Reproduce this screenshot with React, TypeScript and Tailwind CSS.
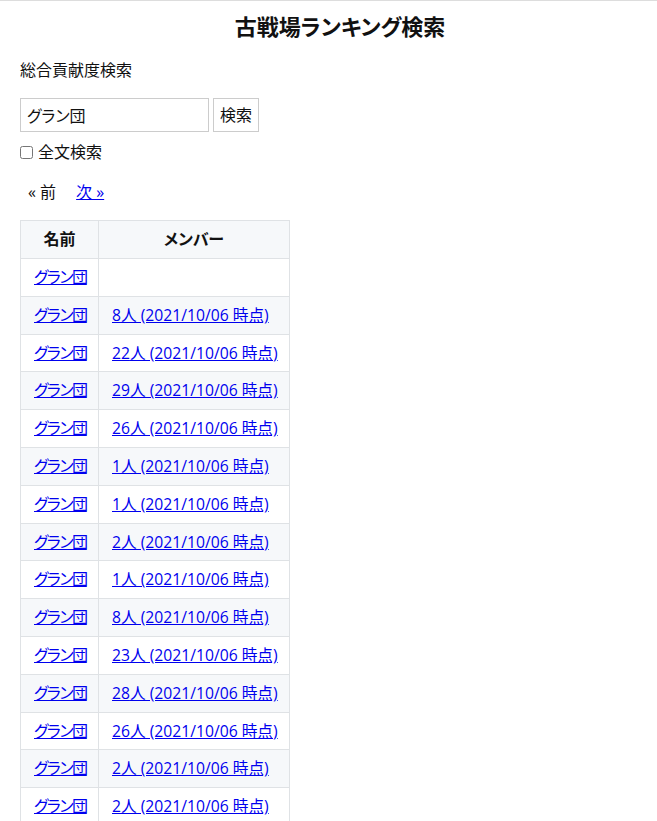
import { useState } from "react";

type Row = { name: string; members: number | null };

const rows: Row[] = [
  { name: "グラン団", members: null },
  { name: "グラン団", members: 8 },
  { name: "グラン団", members: 22 },
  { name: "グラン団", members: 29 },
  { name: "グラン団", members: 26 },
  { name: "グラン団", members: 1 },
  { name: "グラン団", members: 1 },
  { name: "グラン団", members: 2 },
  { name: "グラン団", members: 1 },
  { name: "グラン団", members: 8 },
  { name: "グラン団", members: 23 },
  { name: "グラン団", members: 28 },
  { name: "グラン団", members: 26 },
  { name: "グラン団", members: 2 },
  { name: "グラン団", members: 2 },
];

export default function App() {
  const [query, setQuery] = useState("グラン団");
  const [fullText, setFullText] = useState(false);

  return (
    <div
      className="min-h-screen border-t border-[#dddddd] bg-white px-[20px] text-[16px] text-[#111] [font-feature-settings:'palt']"
      style={{ fontFamily: '"Open Sans", "Noto Sans CJK JP", sans-serif' }}
    >
      <h1 className="mt-[9px] pl-[23px] text-center text-[22px] font-bold leading-[32px]">古戦場ランキング検索</h1>

      <p className="mt-[17px] leading-[22px]">総合貢献度検索</p>

      <form className="mt-[17px] flex gap-[4px]" onSubmit={(e) => e.preventDefault()}>
        <input
          type="text"
          value={query}
          onChange={(e) => setQuery(e.target.value)}
          className="h-[34px] w-[189px] border border-[#cccccc] px-[6px] text-[16px] outline-none"
        />
        <button
          type="submit"
          className="h-[34px] w-[46px] border border-[#cccccc] bg-white text-[16px]"
        >
          検索
        </button>
      </form>

      <label className="mt-[9px] flex items-center gap-[5px] leading-[22px]">
        <input
          type="checkbox"
          checked={fullText}
          onChange={(e) => setFullText(e.target.checked)}
          className="h-[13px] w-[13px]"
        />
        全文検索
      </label>

      <div className="mt-[18px] flex gap-[20px] pl-[8px] leading-[22px]">
        <span>« 前</span>
        <a href="#" className="text-[#0000ee] underline">
          次 »
        </a>
      </div>

      <table className="mt-[17px] w-[269px] table-fixed border-collapse">
        <thead>
          <tr className="bg-[#f6f8fa]">
            <th className="w-[78px] border border-[#dfe2e5] px-[13px] py-[6px] font-bold leading-[25px] whitespace-nowrap">名前</th>
            <th className="w-[191px] border border-[#dfe2e5] px-[13px] py-[6px] font-bold leading-[25px] whitespace-nowrap">メンバー</th>
          </tr>
        </thead>
        <tbody>
          {rows.map((r, i) => (
            <tr key={i} className={i % 2 === 1 ? "bg-[#f6f8fa]" : "bg-white"}>
              <td className="border border-[#dfe2e5] px-[13px] py-[6px] leading-[24.8px] whitespace-nowrap">
                <a href="#" className="tracking-[-1.5px] text-[#0000ee] underline">
                  {r.name}
                </a>
              </td>
              <td className="border border-[#dfe2e5] px-[13px] py-[6px] text-[15.7px] leading-[24.8px] whitespace-nowrap">
                {r.members !== null ? (
                  <a href="#" className="text-[#0000ee] underline">
                    {r.members}人 (2021/10/06 時点)
                  </a>
                ) : null}
              </td>
            </tr>
          ))}
        </tbody>
      </table>
    </div>
  );
}
